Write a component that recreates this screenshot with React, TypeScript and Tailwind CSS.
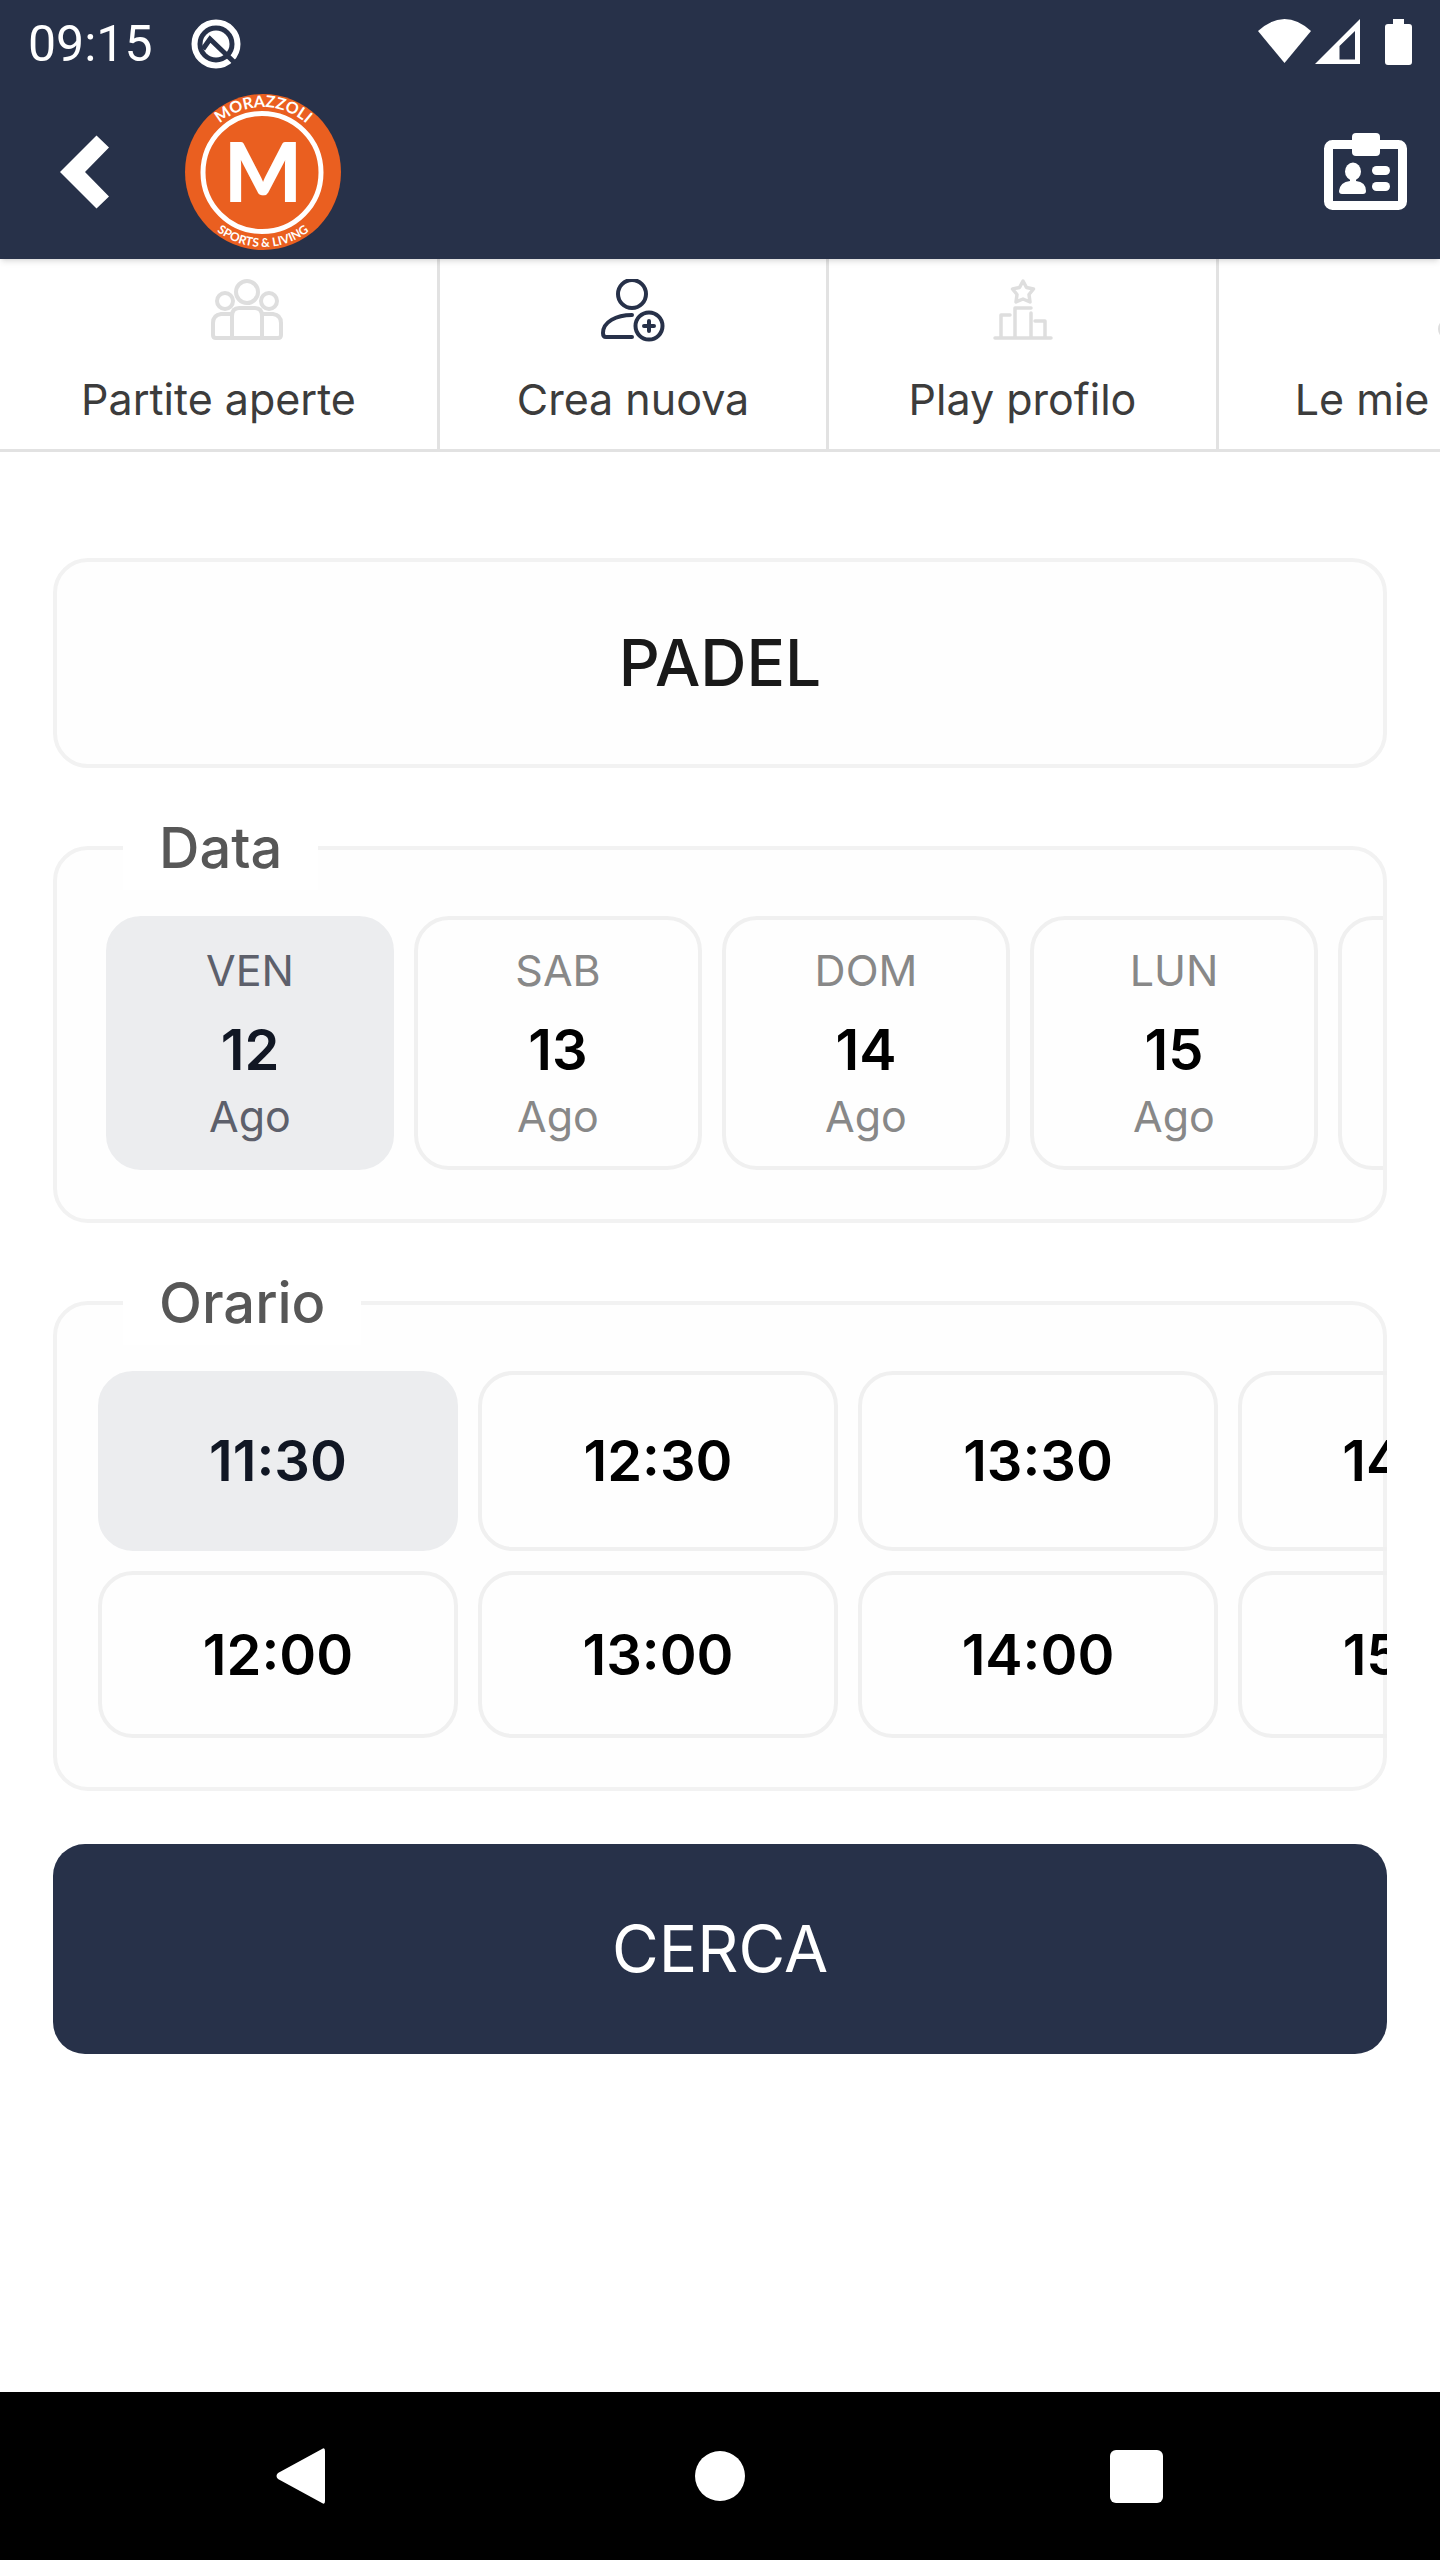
import { useState } from 'react';

type Day = {
  weekday: string;
  day: number;
  month: string;
};

const days: Day[] = [
  { weekday: 'VEN', day: 12, month: 'Ago' },
  { weekday: 'SAB', day: 13, month: 'Ago' },
  { weekday: 'DOM', day: 14, month: 'Ago' },
  { weekday: 'LUN', day: 15, month: 'Ago' },
  { weekday: 'MAR', day: 16, month: 'Ago' },
];

// Listed in column order: the grid has two rows and flows by column
const times = ['11:30', '12:00', '12:30', '13:00', '13:30', '14:00', '14:30', '15:00'];

function StatusBar() {
  return (
    <div className="flex h-21 items-center justify-between pl-7 pr-7">
      <div className="flex items-center gap-[38px] pt-1">
        <span className="font-[Roboto,sans-serif] text-[50px] leading-[80px] text-white">09:15</span>
        <svg width="50" height="50" viewBox="0 0 50 50" aria-hidden="true">
          <circle cx="25" cy="25" r="21.5" fill="none" stroke="#fff" strokeWidth="6" />
          <circle cx="25" cy="25" r="13.5" fill="#fff" />
          <path d="M12 30 L19 20 L44 44" fill="none" stroke="#273149" strokeWidth="5" />
        </svg>
      </div>
      <div className="flex items-center">
        <svg width="154" height="46" viewBox="0 0 154 46" fill="#fff" aria-hidden="true">
          <path d="M0 12 Q26.500 -12 53 12 L26.500 44 Z" />
          <path fillRule="evenodd" d="M57 45 L102 0 V45 Z M81.500 27 V40.500 H97 V12 Z" />
          <path d="M135 0 H146 V5 H151 Q154 5 154 8 V43 Q154 46 151 46 H130 Q127 46 127 43 V8 Q127 5 130 5 H135 Z" />
        </svg>
      </div>
    </div>
  );
}

function Logo() {
  return (
    <svg width="156" height="156" viewBox="0 0 156 156" role="img" aria-label="Morazzoli Sports & Living" className="overflow-visible">
      <defs>
        <path id="arc-top" d="M13 78 A65 65 0 0 1 143 78" />
        <path id="arc-bottom" d="M3 78 A75 75 0 0 0 153 78" />
      </defs>
      <circle cx="78" cy="78" r="78" fill="#ea5f20" />
      <circle cx="77" cy="78.500" r="59" fill="none" stroke="#fff" strokeWidth="5" />
      <g fill="#fff" textAnchor="middle" className="font-[Lato,sans-serif]">
        <text fontSize="16" fontWeight="700">
          <textPath href="#arc-top" startOffset="50%">MORAZZOLI</textPath>
        </text>
        <text fontSize="12" fontWeight="700">
          <textPath href="#arc-bottom" startOffset="50%">SPORTS &amp; LIVING</textPath>
        </text>
        <text x="78" y="108" fontSize="82" fontWeight="900">M</text>
      </g>
    </svg>
  );
}

function Header() {
  return (
    <header className="relative z-10 bg-[#273149] shadow-md">
      <StatusBar />
      <div className="flex h-[175px] items-center justify-between pl-[60px] pr-8">
        <div className="flex items-center gap-[76px]">
          <button type="button" aria-label="Indietro">
            <svg width="49" height="74" viewBox="0 0 49 74" fill="#fff">
              <path d="M0 37 L36.500 0.500 L49 12.500 L25 37 L49 61.500 L36.500 73.500 Z" />
            </svg>
          </button>
          <Logo />
        </div>
        <button type="button" aria-label="Tessera">
          <svg width="84" height="78" viewBox="0 0 84 78" fill="#fff">
            <rect x="4.500" y="11.500" width="74" height="61" rx="4" fill="none" stroke="#fff" strokeWidth="9" />
            <rect x="28" y="0" width="28" height="23" rx="4" />
            <ellipse cx="29" cy="38.500" rx="8" ry="9" />
            <path d="M26 44 H32 V48 Q42 49 42 58 Q42 61 39 61 H18 Q15 61 15 58 Q16 49 26 48 Z" />
            <rect x="48" y="33" width="18" height="9" rx="4.500" />
            <rect x="48" y="49" width="18" height="9" rx="4.500" />
          </svg>
        </button>
      </div>
    </header>
  );
}

function GroupIcon() {
  return (
    <svg width="72" height="64" viewBox="0 0 72 64" fill="none" stroke="#dedede" strokeWidth="4">
      <circle cx="36" cy="13" r="11" />
      <circle cx="14" cy="22" r="8" />
      <circle cx="58" cy="22" r="8" />
      <path d="M21 59 V37 Q21 29 28 29 H44 Q51 29 51 37 V59" />
      <path d="M21 35 H10 Q2 36 2 44 V56 Q2 59 5 59 H67 Q70 59 70 56 V44 Q70 36 62 35 H51" />
    </svg>
  );
}

function AddUserIcon() {
  return (
    <svg width="64" height="64" viewBox="0 0 64 64" fill="none" stroke="#273149" strokeWidth="4" strokeLinecap="round">
      <ellipse cx="31" cy="15" rx="14" ry="14" />
      <path d="M31 36 C15 36 2 43 2 54 Q2 58 5 58 H31" />
      <circle cx="48" cy="47" r="13.500" />
      <path d="M48 42 V52 M43 47 H53" />
    </svg>
  );
}

function PodiumIcon() {
  return (
    <svg width="60" height="64" viewBox="0 0 60 64" fill="none" stroke="#dedede" strokeWidth="3.500" strokeLinecap="round" strokeLinejoin="round">
      <path d="M30 2 L33.500 8.500 L40.500 10 L36 15.500 L37 23 L30 20 L23 23 L24 15.500 L19.500 10 L26.500 8.500 Z" />
      <path d="M2 59 H58 M8 59 V36 H17 M22 59 V29 H38 M38 34 V59 M42 42 H52 V59" />
    </svg>
  );
}

function MatchesIcon() {
  return (
    <svg width="72" height="64" viewBox="0 0 72 64" fill="none" stroke="#dedede" strokeWidth="4">
      <circle cx="11" cy="50" r="9" />
      <circle cx="42" cy="23" r="18" />
      <path d="M30 36 L17 44" />
    </svg>
  );
}

function Tabs() {
  const tab = 'flex shrink-0 flex-col items-center gap-6 border-r-3 border-[#e2e2e2] pt-5 pb-[18px] text-[43px] leading-[64px] text-[#3c3c3c] whitespace-nowrap';

  return (
    <nav className="flex overflow-hidden border-b-3 border-[#e2e2e2]">
      <a href="#partite" className={`${tab} w-[440px]`}>
        <span className="flex pl-14"><GroupIcon /></span>
        Partite aperte
      </a>
      <a href="#crea" aria-current="page" className={`${tab} w-[389px]`}>
        <AddUserIcon />
        Crea nuova
      </a>
      <a href="#profilo" className={`${tab} w-[390px]`}>
        <PodiumIcon />
        Play profilo
      </a>
      <a href="#mie" className={`${tab} w-[432px]`}>
        <span className="flex pl-20"><MatchesIcon /></span>
        Le mie partite
      </a>
    </nav>
  );
}

const panel = 'min-w-0 rounded-[35px] border-4 border-[#f2f2f2] bg-[#fefefe]';
const legend = 'ml-[66px] bg-white px-9 text-[56px] leading-[84px] font-medium text-[#575757]';

export default function App() {
  const [selectedDay, setSelectedDay] = useState(12);
  const [selectedTime, setSelectedTime] = useState('11:30');

  return (
    <div className="flex min-h-screen flex-col bg-white font-[Inter,sans-serif]">
      <Header />
      <Tabs />

      <main className="flex flex-1 flex-col px-[53px] pt-[106px] pb-10">
        <button type="button" className={`${panel} h-[210px] text-[64px] font-medium text-[#191919]`}>
          PADEL
        </button>

        <fieldset className={`${panel} mt-[38px]`}>
          <legend className={legend}>Data</legend>
          <div className="flex gap-5 overflow-hidden pt-[26px] pb-[49px] pl-[49px]">
            {days.map((item) => {
              const selected = item.day === selectedDay;
              return (
                <button
                  key={item.day}
                  type="button"
                  aria-pressed={selected}
                  onClick={() => setSelectedDay(item.day)}
                  className={`flex w-72 shrink-0 flex-col items-center rounded-[35px] border-4 pt-[22px] pb-[22px] text-[43px] leading-[56px] ${
                    selected ? 'border-[#ecedef] bg-[#ecedef] text-[#5d606b]' : 'border-[#f0f0f0] text-[#888888]'
                  }`}
                >
                  <span>{item.weekday}</span>
                  <span className={`mt-[18px] mb-1 text-[56px] leading-[68px] font-semibold ${selected ? 'text-[#111724]' : 'text-black'}`}>
                    {item.day}
                  </span>
                  <span>{item.month}</span>
                </button>
              );
            })}
          </div>
        </fieldset>

        <fieldset className={`${panel} mt-[38px]`}>
          <legend className={legend}>Orario</legend>
          <div className="-mr-1 grid auto-cols-[360px] grid-flow-col grid-rows-[180px_167px] gap-5 overflow-hidden pt-[26px] pb-[49px] pl-[41px]">
            {times.map((time) => (
              <button
                key={time}
                type="button"
                aria-pressed={time === selectedTime}
                onClick={() => setSelectedTime(time)}
                className={`rounded-[35px] border-4 text-[56px] font-semibold ${
                  time === selectedTime ? 'border-[#ecedef] bg-[#ecedef] text-[#111724]' : 'border-[#f0f0f0] text-black'
                }`}
              >
                {time}
              </button>
            ))}
          </div>
        </fieldset>

        <button type="button" className="mt-[53px] h-[210px] rounded-[32px] bg-[#273149] text-[64px] text-white">
          CERCA
        </button>
      </main>

      <footer className="grid h-[168px] grid-cols-3 place-items-center bg-black px-24">
        <button type="button" aria-label="Indietro">
          <svg width="56" height="56" viewBox="0 0 56 56" fill="#fff">
            <path d="M2 25 L46 1 Q49 -1 49 3 V53 Q49 57 46 55 L2 31 Q-1 28 2 25 Z" />
          </svg>
        </button>
        <button type="button" aria-label="Home" className="size-[50px] rounded-full bg-white" />
        <button type="button" aria-label="App recenti" className="size-[53px] rounded-md bg-white" />
      </footer>
    </div>
  );
}
